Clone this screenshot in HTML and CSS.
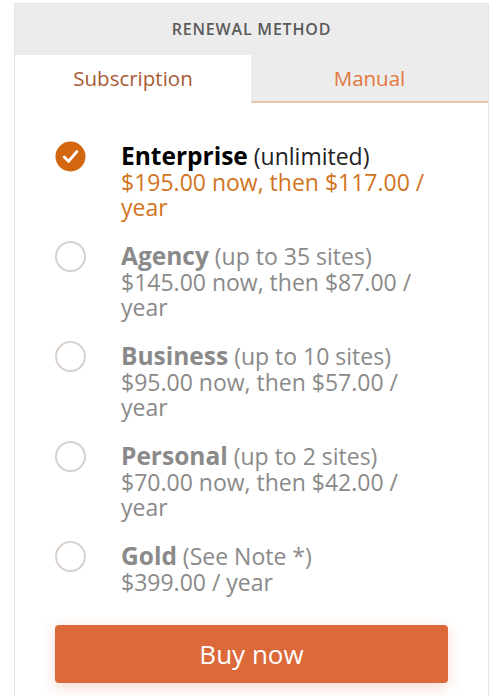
FILE: index.html
```html
<!DOCTYPE html>
<html lang="en">
<head>
    <meta charset="UTF-8">
    <title>Renewal Method</title>
    <link rel="stylesheet" href="styles.css">
</head>
<body>
    <div class="card">
        <div class="card-title">RENEWAL METHOD</div>
        <div class="tabs">
            <div class="tab active">Subscription</div>
            <div class="tab">Manual</div>
        </div>

        <div class="plans">
            <div class="plan selected">
                <span class="radio">
                    <svg viewBox="0 0 32 32" width="32" height="32">
                        <circle cx="16" cy="16" r="15.5" fill="#d2670f"/>
                        <path d="M9.5 16.5 L14 21 L22.5 11" fill="none" stroke="#fff" stroke-width="3" stroke-linecap="round" stroke-linejoin="round"/>
                    </svg>
                </span>
                <div class="plan-text">
                    <div class="plan-name"><b>Enterprise</b> (unlimited)</div>
                    <div class="plan-price">$195.00 now, then $117.00 / year</div>
                </div>
            </div>
            <div class="plan">
                <span class="radio"></span>
                <div class="plan-text">
                    <div class="plan-name"><b>Agency</b> (up to 35 sites)</div>
                    <div class="plan-price">$145.00 now, then $87.00 / year</div>
                </div>
            </div>
            <div class="plan">
                <span class="radio"></span>
                <div class="plan-text">
                    <div class="plan-name"><b>Business</b> (up to 10 sites)</div>
                    <div class="plan-price">$95.00 now, then $57.00 / year</div>
                </div>
            </div>
            <div class="plan">
                <span class="radio"></span>
                <div class="plan-text">
                    <div class="plan-name"><b>Personal</b> (up to 2 sites)</div>
                    <div class="plan-price">$70.00 now, then $42.00 / year</div>
                </div>
            </div>
            <div class="plan">
                <span class="radio"></span>
                <div class="plan-text">
                    <div class="plan-name"><b>Gold</b> (See Note *)</div>
                    <div class="plan-price">$399.00 / year</div>
                </div>
            </div>
        </div>

        <button class="buy-btn">Buy now</button>
    </div>
</body>
</html>
```

FILE: styles.css
```css
body {
    margin: 0;
    background-color: #fff;
    font-family: "Open Sans", Arial, sans-serif;
    color: #8a8a8a;
}

.card {
    margin: 3px 0 0 14px;
    width: 473px;
    min-height: 720px;
    border: 1px solid #e4e4e4;
    border-bottom: none;
}

.card-title {
    height: 51px;
    line-height: 51px;
    background-color: #ececec;
    text-align: center;
    font-size: 16px;
    font-weight: 600;
    letter-spacing: 0.8px;
    color: #5a5a5a;
}

.tabs {
    display: flex;
    height: 48px;
}

.tab {
    flex: 1;
    text-align: center;
    line-height: 46px;
    font-size: 20.5px;
    color: #e3773f;
    background-color: #ececec;
    border-bottom: 2px solid #ebc5b0;
}

.tab.active {
    flex: 0 0 236px;
    background-color: #fff;
    color: #a85a34;
    border-bottom-color: #fff;
}

.plans {
    padding: 38px 0 0 40px;
}

.plan {
    display: flex;
    align-items: flex-start;
    margin-bottom: 21px;
}

.plan:last-child {
    margin-bottom: 0;
}

.radio {
    flex: 0 0 31px;
    height: 31px;
    margin-right: 35px;
    box-sizing: border-box;
    border: 2.5px solid #d8d1cc;
    border-radius: 50%;
}

.plan.selected .radio {
    border: none;
}

.radio svg {
    display: block;
    width: 31px;
    height: 31px;
}

.plan-text {
    width: 316px;
}

.plan-name {
    height: 29px;
    font-size: 23px;
    line-height: 29px;
    white-space: nowrap;
}

.plan-name b {
    font-size: 24.5px;
    font-weight: 700;
}

.plan-price {
    font-size: 23px;
    line-height: 25px;
}

.plan.selected .plan-name {
    color: #222;
}

.plan.selected .plan-name b {
    color: #000;
}

.plan.selected .plan-price {
    color: #d2741e;
}

.buy-btn {
    display: block;
    margin: 30px 0 0 40px;
    width: 393px;
    height: 58px;
    border: none;
    border-radius: 4px;
    background-color: #db693a;
    color: #fff;
    font-family: inherit;
    font-size: 26px;
    box-shadow: 0 4px 14px rgba(219, 105, 58, 0.25);
}
```
